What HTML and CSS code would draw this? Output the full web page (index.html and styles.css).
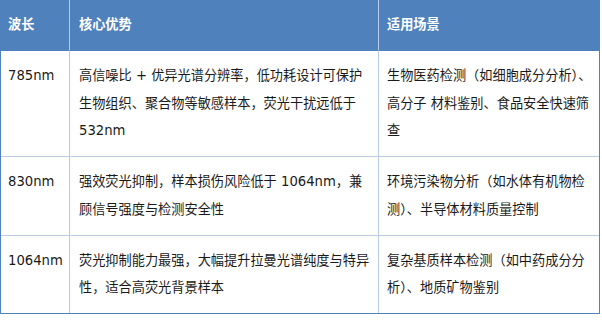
FILE: index.html
```html
<!DOCTYPE html>
<html lang="zh-CN">
<head>
<meta charset="utf-8">
<title>波长对比</title>
<link rel="stylesheet" href="styles.css">
</head>
<body>
<table class="spec">
  <colgroup>
    <col class="c-wave">
    <col class="c-adv">
    <col class="c-use">
  </colgroup>
  <thead>
    <tr>
      <th>波长</th>
      <th class="adv">核心优势</th>
      <th class="use">适用场景</th>
    </tr>
  </thead>
  <tbody>
    <tr>
      <td>785nm</td>
      <td class="adv">高信噪比 + 优异光谱分辨率，低功耗设计可保护生物组织、聚合物等敏感样本，荧光干扰远低于 532nm</td>
      <td class="use">生物医药检测（如细胞成分分析）、高分子 材料鉴别、食品安全快速筛查</td>
    </tr>
    <tr>
      <td>830nm</td>
      <td class="adv">强效荧光抑制，样本损伤风险低于 1064nm，兼顾信号强度与检测安全性</td>
      <td class="use">环境污染物分析（如水体有机物检测）、半导体材料质量控制</td>
    </tr>
    <tr>
      <td>1064nm</td>
      <td class="adv">荧光抑制能力最强，大幅提升拉曼光谱纯度与特异性，适合高荧光背景样本</td>
      <td class="use">复杂基质样本检测（如中药成分分析）、地质矿物鉴别</td>
    </tr>
  </tbody>
</table>
</body>
</html>
```
FILE: styles.css
```css
html, body {
  margin: 0;
  padding: 0;
  background: #ffffff;
}

.spec {
  table-layout: fixed;
  width: 600px;
  border-collapse: separate;
  border-spacing: 0;
  border-left: 1px solid #4f81bd;
  border-right: 1px solid #4f81bd;
  border-bottom: 1px solid #4f81bd;
  font-family: "DejaVu Sans", "Noto Sans CJK SC", sans-serif;
  font-size: 13.2px;
  line-height: 27.75px;
  color: #1a1a1a;
}

.c-wave { width: 69px; }
.c-adv { width: 309px; }
.c-use { width: 220px; }

.spec th,
.spec td {
  box-sizing: border-box;
  padding: 11px 0 11px 7px;
  text-align: left;
  vertical-align: top;
  border-right: 1px solid #b8cce4;
  border-bottom: 1px solid #b8cce4;
}

.spec th.use,
.spec td.use {
  border-right: none;
  padding-left: 8px;
}

.spec th.adv,
.spec td.adv {
  padding-left: 9px;
  padding-right: 5px;
}

.spec thead th {
  background: #4f81bd;
  color: #ffffff;
  font-weight: bold;
  border-bottom-color: #4f81bd;
}

.spec tbody tr:last-child td {
  border-bottom: none;
}
```
